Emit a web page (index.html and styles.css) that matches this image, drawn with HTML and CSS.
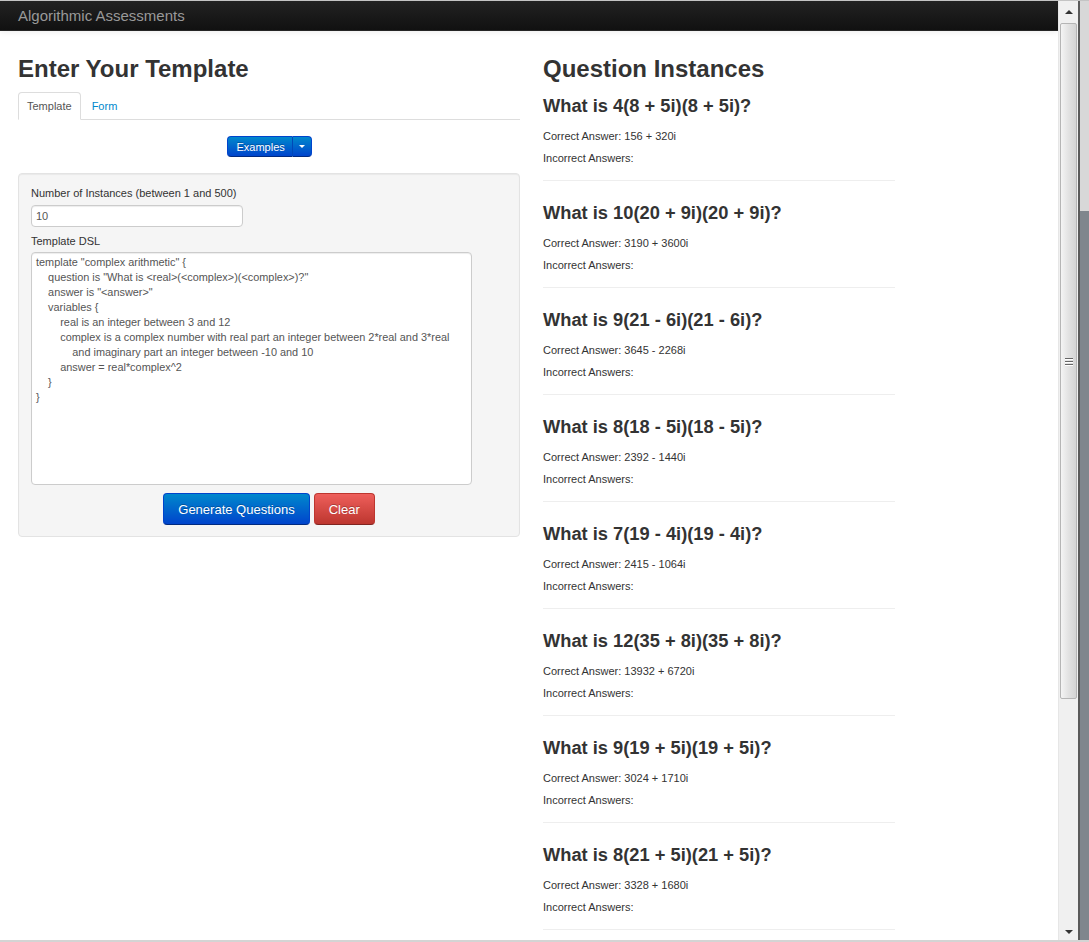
FILE: index.html
```html
<!DOCTYPE html>
<html>
<head>
<meta charset="utf-8">
<title>Algorithmic Assessments</title>
<link rel="stylesheet" href="styles.css">
</head>
<body>
<div class="window">
  <div class="frame">
    <div class="viewport">
      <div class="navbar"><span class="brand">Algorithmic Assessments</span></div>
      <div class="container">
        <div class="col-left">
          <h3 class="title">Enter Your Template</h3>
          <ul class="tabs">
            <li class="tab active">Template</li>
            <li class="tab"><a href="#">Form</a></li>
          </ul>
          <div class="examples-row">
            <div class="btn-group">
              <button class="btn btn-primary btn-small">Examples</button><button class="btn btn-primary btn-small btn-caret"><span class="caret"></span></button>
            </div>
          </div>
          <div class="well">
            <label class="label">Number of Instances (between 1 and 500)</label>
            <input class="input" type="text" value="10">
            <label class="label label-dsl">Template DSL</label>
            <textarea class="dsl" spellcheck="false">template "complex arithmetic" {
    question is "What is &lt;real&gt;(&lt;complex&gt;)(&lt;complex&gt;)?"
    answer is "&lt;answer&gt;"
    variables {
        real is an integer between 3 and 12
        complex is a complex number with real part an integer between 2*real and 3*real
            and imaginary part an integer between -10 and 10
        answer = real*complex^2
    }
}</textarea>
            <div class="actions">
              <button class="btn btn-primary btn-large">Generate Questions</button>
              <button class="btn btn-danger btn-large">Clear</button>
            </div>
          </div>
        </div>
        <div class="col-right">
          <h3 class="title">Question Instances</h3>
          <div class="q-list">
            <div class="q"><h4>What is 4(8 + 5i)(8 + 5i)?</h4><p class="ans">Correct Answer: 156 + 320i</p><p class="inc">Incorrect Answers:</p><hr></div>
            <div class="q"><h4>What is 10(20 + 9i)(20 + 9i)?</h4><p class="ans">Correct Answer: 3190 + 3600i</p><p class="inc">Incorrect Answers:</p><hr></div>
            <div class="q"><h4>What is 9(21 - 6i)(21 - 6i)?</h4><p class="ans">Correct Answer: 3645 - 2268i</p><p class="inc">Incorrect Answers:</p><hr></div>
            <div class="q"><h4>What is 8(18 - 5i)(18 - 5i)?</h4><p class="ans">Correct Answer: 2392 - 1440i</p><p class="inc">Incorrect Answers:</p><hr></div>
            <div class="q"><h4>What is 7(19 - 4i)(19 - 4i)?</h4><p class="ans">Correct Answer: 2415 - 1064i</p><p class="inc">Incorrect Answers:</p><hr></div>
            <div class="q"><h4>What is 12(35 + 8i)(35 + 8i)?</h4><p class="ans">Correct Answer: 13932 + 6720i</p><p class="inc">Incorrect Answers:</p><hr></div>
            <div class="q"><h4>What is 9(19 + 5i)(19 + 5i)?</h4><p class="ans">Correct Answer: 3024 + 1710i</p><p class="inc">Incorrect Answers:</p><hr></div>
            <div class="q"><h4>What is 8(21 + 5i)(21 + 5i)?</h4><p class="ans">Correct Answer: 3328 + 1680i</p><p class="inc">Incorrect Answers:</p><hr></div>
          </div>
        </div>
      </div>
    </div>
    <div class="scrollbar">
      <div class="sb-btn"><span class="tri-up"></span></div>
      <div class="sb-track">
        <div class="sb-thumb"><span class="grip"></span><span class="grip"></span><span class="grip"></span></div>
      </div>
      <div class="sb-btn sb-btn-down"><span class="tri-down"></span></div>
    </div>
    <div class="edge"></div>
  </div>
  <div class="bottom-line"></div>
</div>
</body>
</html>
```

FILE: styles.css
```css
* { box-sizing: border-box; }
html, body { margin: 0; padding: 0; }
body {
  font-family: "Liberation Sans", Arial, sans-serif;
  font-size: 11px;
  color: #333;
  background: #fff;
  overflow: hidden;
  width: 1089px;
  height: 942px;
}
.window { width: 1089px; height: 942px; display: flex; flex-direction: column; }
.frame { display: flex; height: 940px; border-top: 1px solid #c4c4c4; }
.viewport { width: 1058px; height: 939px; overflow: hidden; background: #fff; }
.bottom-line { height: 2px; background: #d4d4d4; }

.navbar {
  height: 30px;
  background: linear-gradient(#222, #111);
  border-bottom: 1px solid #252525;
  box-shadow: 0 1px 6px rgba(0,0,0,0.08);
  display: flex;
  align-items: center;
  padding-left: 18px;
}
.brand { color: #999; font-size: 15px; }

.container { display: flex; gap: 23px; padding: 0 18px; }
.col-left { width: 502px; }
.col-right { flex: 1; }

.title {
  font-size: 24px;
  line-height: 30px;
  font-weight: bold;
  margin: 23px 0 0;
  color: #333;
}

.tabs {
  list-style: none;
  margin: 8px 0 0;
  padding: 0;
  display: flex;
  border-bottom: 1px solid #ddd;
  height: 28px;
}
.tab {
  padding: 0 8px;
  line-height: 26px;
  margin-right: 2px;
  margin-bottom: -1px;
  border: 1px solid transparent;
  border-radius: 4px 4px 0 0;
  color: #555;
}
.tab.active { background: #fff; border-color: #ddd #ddd transparent; height: 28px; }
.tab a { color: #08c; text-decoration: none; }

.examples-row { display: flex; justify-content: center; margin-top: 16px; }
.btn-group { display: flex; }
.btn {
  font-family: "Liberation Sans", Arial, sans-serif;
  border: 1px solid;
  border-radius: 4px;
  cursor: pointer;
  color: #fff;
  text-shadow: 0 -1px 0 rgba(0,0,0,0.25);
}
.btn-primary {
  background: linear-gradient(#0088cc, #0044cc);
  border-color: #0044cc #0044cc #002a80;
}
.btn-danger {
  background: linear-gradient(#ee5f5b, #bd362f);
  border-color: #bd362f #bd362f #802420;
}
.btn-small { height: 21px; font-size: 11px; padding: 0 9px; }
.btn-group .btn-small:first-child { border-radius: 4px 0 0 4px; width: 65px; border-right: 0; }
.btn-caret {
  border-radius: 0 4px 4px 0;
  width: 20px;
  padding: 0;
  border-left: 1px solid #0048b8;
  display: flex;
  align-items: center;
  justify-content: center;
}
.caret {
  width: 0; height: 0;
  border-left: 3px solid transparent;
  border-right: 3px solid transparent;
  border-top: 3px solid #fff;
}

.well {
  margin-top: 16px;
  background: #f5f5f5;
  border: 1px solid #e3e3e3;
  border-radius: 4px;
  padding: 11px 12px 11px;
  box-shadow: inset 0 1px 1px rgba(0,0,0,0.05);
}
.label { display: block; line-height: 16px; color: #333; }
.input {
  display: block;
  margin-top: 4px;
  width: 212px;
  height: 22px;
  border: 1px solid #ccc;
  border-radius: 4px;
  padding: 0 4px;
  font-family: "Liberation Sans", Arial, sans-serif;
  font-size: 11px;
  color: #555;
  background: #fff;
  box-shadow: inset 0 1px 1px rgba(0,0,0,0.075);
}
.label-dsl { margin-top: 6px; }
.dsl {
  display: block;
  margin-top: 3px;
  width: 441px;
  height: 233px;
  border: 1px solid #ccc;
  border-radius: 4px;
  padding: 2px 4px;
  font-family: "Liberation Sans", Arial, sans-serif;
  font-size: 10.9px;
  line-height: 15px;
  color: #555;
  background: #fff;
  resize: none;
  white-space: pre;
  overflow: hidden;
  box-shadow: inset 0 1px 1px rgba(0,0,0,0.075);
}
.actions { display: flex; justify-content: center; gap: 4px; margin-top: 8px; }
.btn-large { height: 32px; font-size: 13px; padding: 0 14px; }

.q-list { width: 352px; margin-top: 12px; }
.q h4 { font-size: 18.3px; line-height: 20px; margin: 0; font-weight: bold; color: #333; white-space: nowrap; }
.q p { margin: 0; line-height: 16px; }
.q .ans { margin-top: 12px; }
.q .inc { margin-top: 6px; }
.q hr { margin: 14px 0 21px; border: 0; border-top: 1px solid #eee; border-bottom: 1px solid #fff; height: 0; }

.scrollbar {
  width: 20px;
  height: 939px;
  background: #f0f0f0;
  display: flex;
  flex-direction: column;
  border-left: 1px solid #e6e6e6;
}
.sb-btn { height: 21px; display: flex; align-items: center; justify-content: center; background: #f0f0f0; }
.sb-btn-down { height: 16px; }
.tri-up { width: 0; height: 0; border-left: 4px solid transparent; border-right: 4px solid transparent; border-bottom: 4px solid #333; }
.tri-down { width: 0; height: 0; border-left: 4px solid transparent; border-right: 4px solid transparent; border-top: 4px solid #333; }
.sb-track { flex: 1; padding-top: 1px; }
.sb-thumb {
  height: 676px;
  margin: 0 1px;
  border: 1px solid #b5b5b5;
  border-radius: 2px;
  background: linear-gradient(90deg, #f4f4f4, #e2e2e2 50%, #d4d4d4);
  display: flex;
  flex-direction: column;
  align-items: center;
  justify-content: center;
  gap: 2px;
}
.grip { width: 8px; height: 1px; background: #666; box-shadow: 0 1px 0 #fff; }
.edge {
  width: 11px;
  height: 939px;
  border-left: 2px solid #5a5a5a;
  background: linear-gradient(#d8d8d8 0, #d8d8d8 210px, #7f868d 210px);
}
```
